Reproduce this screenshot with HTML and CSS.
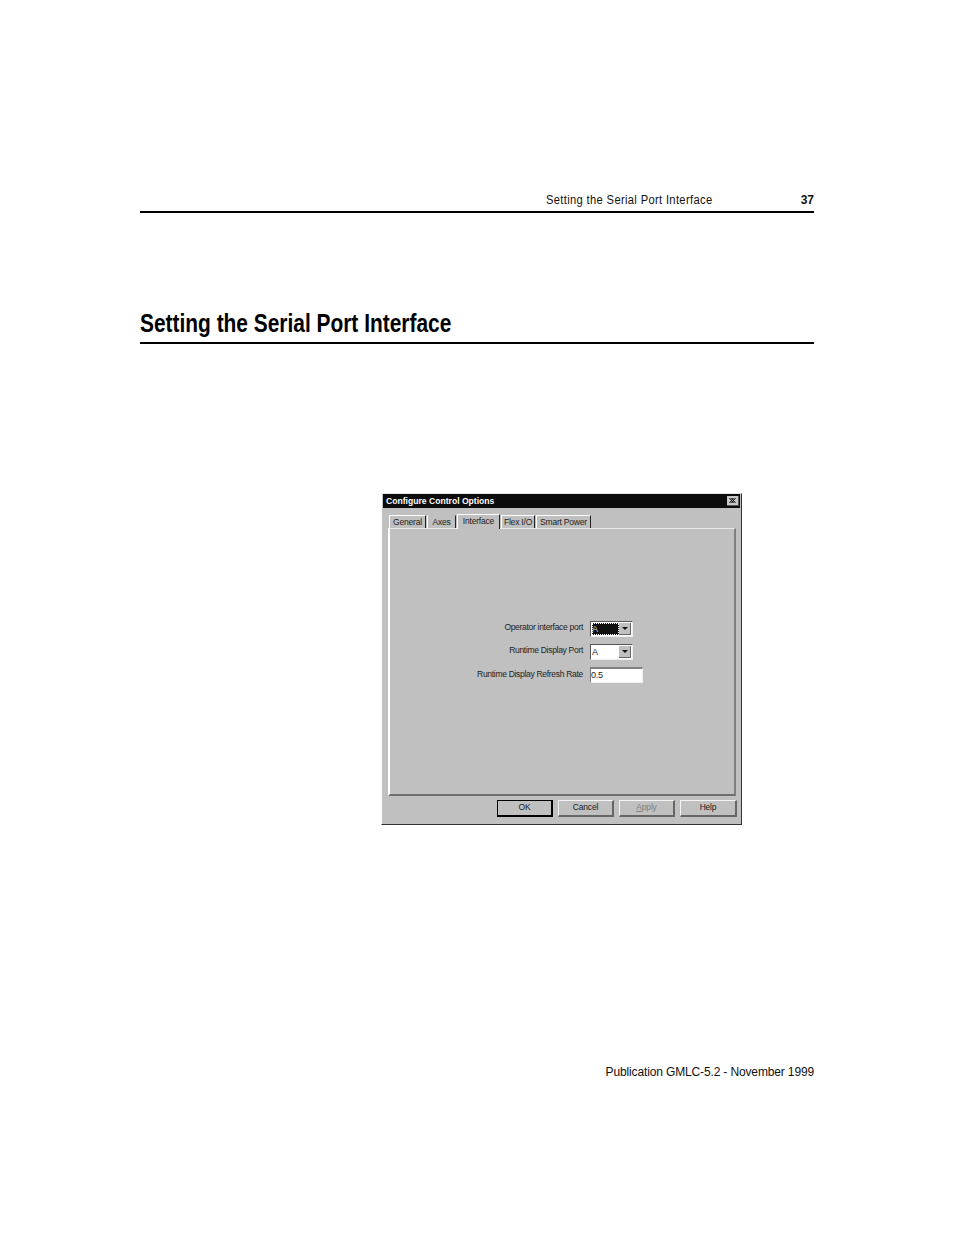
FILE: index.html
```html
<!DOCTYPE html>
<html lang="en">
<head>
    <meta charset="UTF-8">
    <meta name="viewport" content="width=device-width, initial-scale=1.0">
    <title>Setting the Serial Port Interface</title>
    <link rel="stylesheet" href="styles.css">
</head>
<body>
    <div class="page">
        <div class="running-head">
            <span class="running-title">Setting the Serial Port Interface</span>
            <span class="page-number">37</span>
        </div>

        <h1 class="section-title"><span class="section-text">Setting the Serial Port Interface</span></h1>

        <div class="dialog">
            <div class="title-bar">
                <span class="title-text">Configure Control Options</span>
                <span class="close-button">
                    <svg width="7" height="5" viewBox="0 0 7 5"><path d="M0.5 0L4.5 5M2.5 0L6.5 5M4.5 0L0.5 5M6.5 0L2.5 5" stroke="#000" stroke-width="1" fill="none"/></svg>
                </span>
            </div>

            <div class="tabs">
                <div class="tab tab-general">General</div>
                <div class="tab tab-axes">Axes</div>
                <div class="tab tab-active">Interface</div>
                <div class="tab tab-flex">Flex I/O</div>
                <div class="tab tab-power">Smart Power</div>
            </div>

            <div class="tab-panel">
                <div class="form-grid">
                    <label class="form-label">Operator interface port</label>
                    <div class="combo">
                        <span class="combo-value combo-focus">A</span>
                        <span class="combo-arrow"></span>
                    </div>
                    <label class="form-label">Runtime Display Port</label>
                    <div class="combo">
                        <span class="combo-value">A</span>
                        <span class="combo-arrow"></span>
                    </div>
                    <label class="form-label form-label-low">Runtime Display Refresh Rate</label>
                    <div class="text-input">0.5</div>
                </div>
            </div>

            <div class="button-row">
                <button class="btn btn-default">OK</button>
                <button class="btn">Cancel</button>
                <button class="btn btn-disabled"><u>A</u>pply</button>
                <button class="btn btn-help">Help</button>
            </div>
        </div>

        <div class="publication">Publication GMLC-5.2 - November 1999</div>
    </div>
</body>
</html>
```

FILE: styles.css
```css
body {
    margin: 0;
    padding: 0;
    background-color: #fff;
    color: #111;
    font-family: "Liberation Sans", Arial, sans-serif;
}

.page {
    width: 674px;
    height: 1235px;
    margin-left: 140px;
    padding-top: 192px;
    box-sizing: border-box;
    display: flex;
    flex-direction: column;
    opacity: 0.999; /* keeps text antialiasing grey like the scan */
}

.running-head {
    display: flex;
    justify-content: space-between;
    height: 19px;
    line-height: 16px;
    border-bottom: 2px solid #000;
    font-size: 12px;
}

.running-title {
    margin-left: 406px;
    letter-spacing: 0.37px;
    transform: scaleX(0.93);
    transform-origin: left center;
}

.page-number {
    font-weight: bold;
}

.section-title {
    margin: 95px 0 0 0;
    height: 34px;
    line-height: 30px;
    border-bottom: 2px solid #000;
    font-size: 25px;
    font-weight: bold;
    color: #000;
}

/* no narrow face installed, so squeeze the bold one */
.section-text {
    display: inline-block;
    transform: scaleX(0.836);
    transform-origin: left center;
    white-space: nowrap;
}

.dialog {
    width: 361px;
    height: 332px;
    margin: 149px 0 0 241px;
    padding: 0 1px 0 1px;
    box-sizing: border-box;
    display: flex;
    flex-direction: column;
    background-color: #c0c0c0;
    border-left: 1px solid #fff;
    border-top: 1px solid #e4e4e4;
    border-right: 1px solid #333;
    border-bottom: 1px solid #333;
    font-size: 8.5px;
    letter-spacing: -0.2px;
    color: #222;
}

.title-bar {
    height: 14px;
    padding: 0 1px 0 3px;
    display: flex;
    justify-content: space-between;
    align-items: center;
    background-color: #0c0c0c;
}

.title-text {
    color: #fff;
    font-size: 8.6px;
    font-weight: bold;
    letter-spacing: 0;
}

.close-button {
    width: 12px;
    height: 10px;
    display: flex;
    align-items: center;
    justify-content: center;
    background-color: #c8c8c8;
    border-right: 1px solid #555;
    border-bottom: 1px solid #555;
    box-sizing: border-box;
}

.tabs {
    display: flex;
    align-items: flex-end;
    height: 20px;
    padding-left: 6px;
    position: relative;
    z-index: 1;
}

.tab {
    height: 13px;
    line-height: 13px;
    text-align: center;
    box-sizing: border-box;
    border-left: 1px solid #fff;
    border-top: 1px solid #fff;
    border-right: 1px solid #222;
    margin-right: 1px;
}

.tab-general { width: 37px; }
.tab-axes { width: 29px; border-top-color: #c0c0c0; }
.tab-flex { width: 34px; }
.tab-power { width: 55px; }

.tab-active {
    width: 43px;
    height: 15px;
    margin-bottom: -1px;
    background-color: #c0c0c0;
}

.tab-panel {
    width: 348px;
    height: 268px;
    margin-left: 5px;
    box-sizing: border-box;
    border-left: 2px solid #fff;
    border-top: 1px solid #e8e8e8;
    border-right: 2px solid #808080;
    border-bottom: 2px solid #707070;
}

.form-grid {
    display: grid;
    grid-template-columns: 193px auto;
    grid-auto-rows: 16px;
    row-gap: 7px;
    column-gap: 7px;
    margin-top: 92px;
}

.form-label {
    text-align: right;
    line-height: 12px;
    letter-spacing: -0.3px;
    white-space: nowrap;
}

.form-label-low {
    line-height: 14px;
}

.combo {
    width: 43px;
    height: 16px;
    box-sizing: border-box;
    display: flex;
    padding: 1px;
    background-color: #fff;
    border-left: 1px solid #555;
    border-top: 1px solid #555;
    border-right: 1px solid #eee;
    border-bottom: 1px solid #eee;
}

.combo-value {
    flex: 1;
    line-height: 13px;
    font-size: 9px;
}

.combo-focus {
    background-color: #111;
    color: #ccc;
    outline: 1px dotted #fff;
    outline-offset: -1px;
}

.combo-arrow {
    width: 12px;
    background-color: #c0c0c0;
    border-right: 1px solid #666;
    border-bottom: 1px solid #666;
    box-sizing: border-box;
    display: flex;
    align-items: center;
    justify-content: center;
}

.combo-arrow::after {
    content: "";
    border-left: 3px solid transparent;
    border-right: 3px solid transparent;
    border-top: 3px solid #111;
}

.text-input {
    width: 53px;
    height: 16px;
    box-sizing: border-box;
    line-height: 13px;
    font-size: 9px;
    background-color: #fff;
    border-left: 1px solid #777;
    border-top: 2px solid #808080;
    border-right: 1px solid #eee;
    border-bottom: 1px solid #eee;
}

.button-row {
    display: flex;
    gap: 5px;
    margin: 4px 0 0 114px;
}

.btn {
    width: 56px;
    height: 17px;
    padding: 0 0 2px 0;
    box-sizing: border-box;
    background-color: #c0c0c0;
    color: #222;
    font-family: "Liberation Sans", Arial, sans-serif;
    font-size: 8.5px;
    letter-spacing: -0.2px;
    border-left: 1px solid #f4f4f4;
    border-top: 1px solid #f4f4f4;
    border-right: 2px solid #666;
    border-bottom: 2px solid #666;
}

.btn-default {
    border: 1px solid #000;
    border-right-width: 2px;
    border-bottom-width: 2px;
}

.btn-disabled {
    color: #808080;
}

.btn-help {
    width: 57px;
}

.publication {
    margin-top: 239px;
    text-align: right;
    font-size: 12px;
    letter-spacing: -0.14px;
    line-height: 16px;
}
```
